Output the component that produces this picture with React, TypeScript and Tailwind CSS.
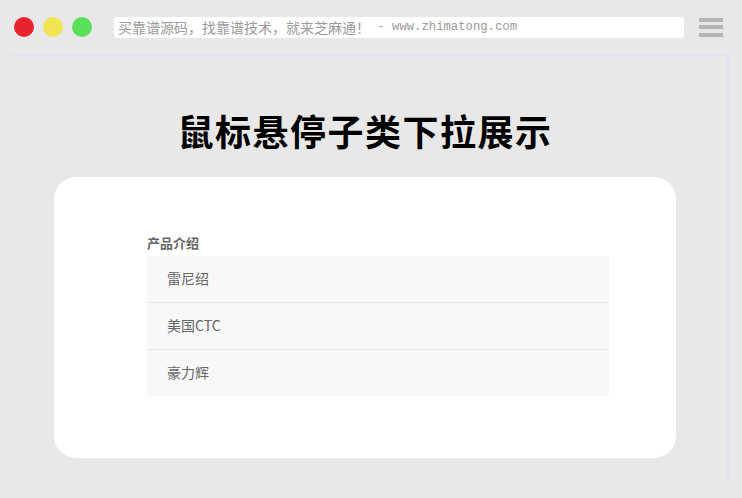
export default function App() {
  const items = ["雷尼绍", "美国CTC", "豪力辉"];
  return (
    <div className="w-[742px] h-[498px] bg-[#e8e8e8] overflow-hidden relative" style={{ fontFamily: '"Noto Sans CJK SC", "Noto Sans", sans-serif' }}>
      {/* top bar */}
      <div className="flex items-center h-[54px] pl-[14px] pr-[19px]">
        <div className="flex gap-[9px]">
          <span className="w-[20px] h-[20px] rounded-full bg-[#e8222f]" />
          <span className="w-[20px] h-[20px] rounded-full bg-[#f2e452]" />
          <span className="w-[20px] h-[20px] rounded-full bg-[#58e05a]" />
        </div>
        <div className="ml-[22px] w-[570px] h-[21px] bg-white rounded-[2px] flex items-center pl-[4px] text-[#9a9a9a] whitespace-pre">
          <span className="text-[14px] leading-none" style={{ fontFamily: '"Noto Sans CJK SC", sans-serif' }}>买靠谱源码，找靠谱技术，就来芝麻通！</span>
          <span className="text-[12.25px] leading-none" style={{ fontFamily: '"Liberation Mono", monospace' }}> - www.zhimatong.com</span>
        </div>
        <div className="ml-auto flex flex-col gap-[3.5px] w-[24px]">
          <span className="h-[4px] bg-[#b5b5b5]" />
          <span className="h-[4px] bg-[#b5b5b5]" />
          <span className="h-[4px] bg-[#b5b5b5]" />
        </div>
      </div>
      {/* frame */}
      <div className="ml-[10px] w-[720px] h-[428px] border-t-2 border-r-[3px] border-[#e1e4f0]">
        <div className="ml-[44px] w-[622px]">
          <h1 className="pt-[50px] pb-[2px] text-center text-[36px] leading-[48px] font-bold text-black tracking-[1.5px]">鼠标悬停子类下拉展示</h1>
          <div className="mt-[21px] h-[281px] bg-white rounded-[22px] pt-[56px] pl-[93px]">
            <div className="text-[13px] leading-[20px] font-bold text-[#666]">产品介绍</div>
            <div className="mt-[3px] w-[462px] bg-[#f8f8f8]">
              {items.map((t, i) => (
                <div key={t} className={`flex items-center pl-[20px] text-[14px] text-[#666] ${i < items.length - 1 ? "h-[47px] border-b border-[#e6e6e6]" : "h-[46px]"}`}>
                  <span className="-mt-[1px]">{t}</span>
                </div>
              ))}
            </div>
          </div>
        </div>
      </div>
    </div>
  );
}
